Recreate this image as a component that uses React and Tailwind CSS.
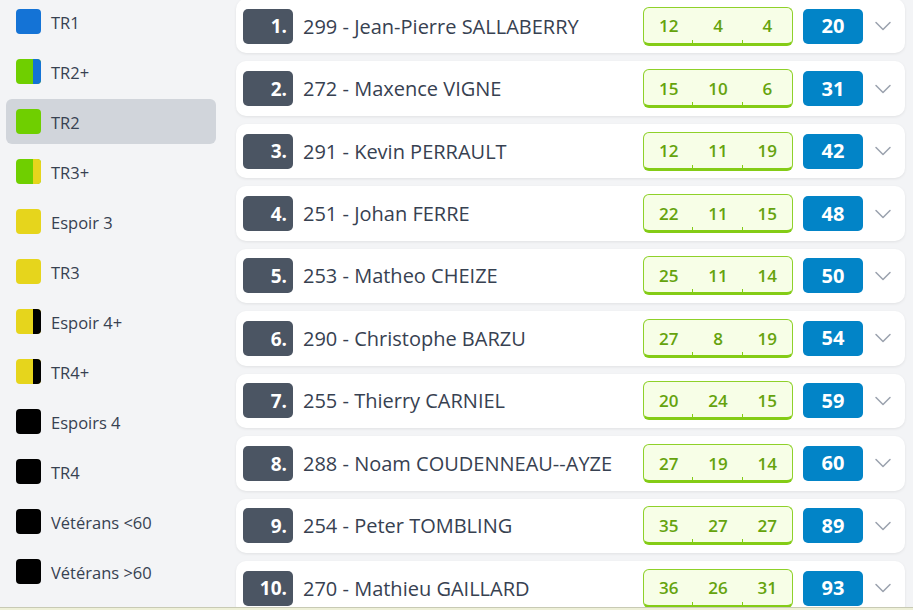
import { ChevronDown } from "lucide-react";

const BLUE = "#1473d6";
const GREEN = "#6fcf00";
const YELLOW = "#e6d51c";
const BLACK = "#000000";

const categories = [
  { label: "TR1", main: BLUE },
  { label: "TR2+", main: GREEN, side: BLUE },
  { label: "TR2", main: GREEN, active: true },
  { label: "TR3+", main: GREEN, side: YELLOW },
  { label: "Espoir 3", main: YELLOW },
  { label: "TR3", main: YELLOW },
  { label: "Espoir 4+", main: YELLOW, side: BLACK },
  { label: "TR4+", main: YELLOW, side: BLACK },
  { label: "Espoirs 4", main: BLACK },
  { label: "TR4", main: BLACK },
  { label: "Vétérans <60", main: BLACK },
  { label: "Vétérans >60", main: BLACK },
];

const riders = [
  { bib: 299, name: "Jean-Pierre SALLABERRY", scores: [12, 4, 4], total: 20 },
  { bib: 272, name: "Maxence VIGNE", scores: [15, 10, 6], total: 31 },
  { bib: 291, name: "Kevin PERRAULT", scores: [12, 11, 19], total: 42 },
  { bib: 251, name: "Johan FERRE", scores: [22, 11, 15], total: 48 },
  { bib: 253, name: "Matheo CHEIZE", scores: [25, 11, 14], total: 50 },
  { bib: 290, name: "Christophe BARZU", scores: [27, 8, 19], total: 54 },
  { bib: 255, name: "Thierry CARNIEL", scores: [20, 24, 15], total: 59 },
  { bib: 288, name: "Noam COUDENNEAU--AYZE", scores: [27, 19, 14], total: 60 },
  { bib: 254, name: "Peter TOMBLING", scores: [35, 27, 27], total: 89 },
  { bib: 270, name: "Mathieu GAILLARD", scores: [36, 26, 31], total: 93 },
];

function Swatch({ main, side }) {
  return (
    <div className="w-[25px] h-[25px] rounded-[4px] overflow-hidden flex shrink-0" style={{ backgroundColor: main }}>
      <div className="flex-1" />
      {side && <div className="w-[8px] h-full" style={{ backgroundColor: side }} />}
    </div>
  );
}

function Sidebar() {
  return (
    <div className="w-[236px] shrink-0 px-[6px] flex flex-col gap-[5px] mt-[-1px]">
      {categories.map((c) => (
        <div
          key={c.label}
          className={`w-[210px] h-[45px] shrink-0 rounded-[6px] flex items-center gap-[10px] px-[10px] ${c.active ? "bg-[#d1d5db]" : ""}`}
        >
          <Swatch main={c.main} side={c.side} />
          <span className="pt-[3px] text-[16.5px] font-medium text-[#374151]">{c.label}</span>
        </div>
      ))}
    </div>
  );
}

function RiderRow({ rank, rider }) {
  return (
    <div className="h-[54.44px] shrink-0 bg-white rounded-[10px] shadow-[0_1px_3px_rgba(0,0,0,0.08)] flex items-center pl-[7px] pr-[8px]">
      <div className="w-[50px] h-[35px] rounded-[5px] bg-[#4b5563] text-white font-bold text-[19px] flex items-center justify-end pr-[6px] pt-[1px]">
        {rank}.
      </div>
      <div className="flex-1 ml-[10px] pt-[1px] text-[20px] font-medium text-[#374151] whitespace-nowrap">
        {rider.bib} - {rider.name}
      </div>
      <div className="relative w-[150px] h-[39px] rounded-[6px] border border-[#8fd12a] border-b-[3px] border-b-[#84cc16] bg-[#f7fee7] flex">
        {rider.scores.map((s, i) => (
          <div key={i} className="relative flex-1 flex items-center justify-center text-[17px] font-semibold text-[#65a30d] pt-[2px]">
            {s}
            {i < 2 && <span className="absolute right-0 bottom-0 w-px h-[3px] bg-[#84cc16]" />}
          </div>
        ))}
      </div>
      <div className="ml-[10px] w-[60px] h-[35px] rounded-[5px] bg-[#0284c7] text-white font-bold text-[20px] flex items-center justify-center">
        {rider.total}
      </div>
      <ChevronDown size={28} strokeWidth={1.3} className="ml-[6px] text-[#9ca3af]" />
    </div>
  );
}

export default function App() {
  return (
    <div className="w-[913px] h-[610px] overflow-hidden bg-[#f3f4f6] flex flex-col" style={{ fontFamily: "'Open Sans', 'Noto Sans', sans-serif" }}>
      <div className="h-[607px] flex overflow-hidden">
        <Sidebar />
        <div className="flex-1 pr-[8px] flex flex-col gap-[8px] mt-[-1px]">
          {riders.map((r, i) => (
            <RiderRow key={r.bib} rank={i + 1} rider={r} />
          ))}
        </div>
      </div>
      <div className="h-[3px] border-t border-[#c8cab4] bg-[#eef0d8]" />
    </div>
  );
}
